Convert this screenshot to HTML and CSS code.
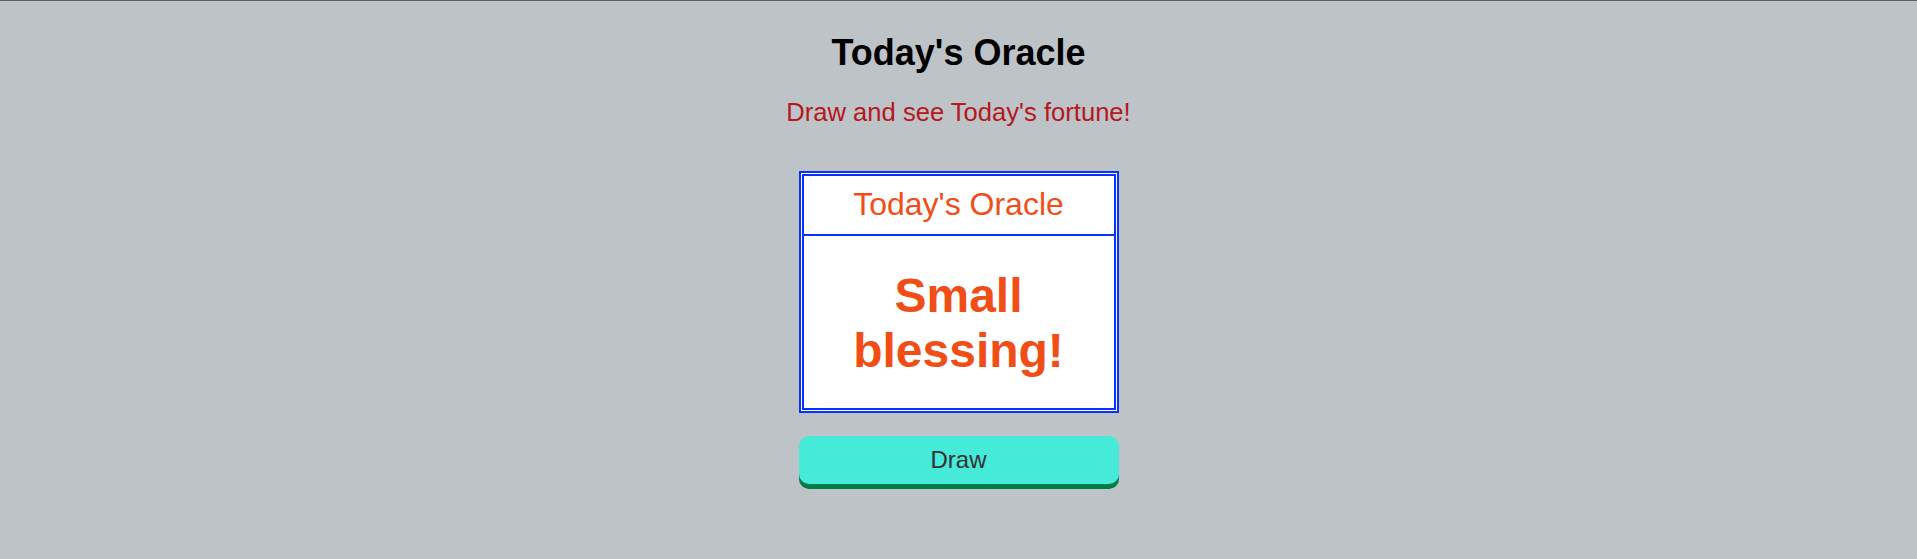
FILE: index.html
```html
<!DOCTYPE html>
<html lang="en">
<head>
<meta charset="utf-8">
<title>Today's Oracle</title>
<link rel="stylesheet" href="styles.css">
</head>
<body>
<main class="page">
  <h1 class="title">Today's Oracle</h1>
  <p class="subtitle">Draw and see Today's fortune!</p>
  <section class="card">
    <div class="card-inner">
      <div class="card-head">Today's Oracle</div>
      <div class="card-body">Small<br>blessing!</div>
    </div>
  </section>
  <button class="draw-btn" type="button">Draw</button>
</main>
</body>
</html>
```
FILE: styles.css
```css
html, body {
  margin: 0;
  padding: 0;
}
body {
  background: #bdc3c7;
  border-top: 1px solid #5c6065;
  font-family: "Liberation Sans", Arial, sans-serif;
  min-height: 558px;
  box-sizing: border-box;
}
.page {
  display: flex;
  flex-direction: column;
  align-items: center;
  padding-top: 32px;
}
.title {
  margin: 0;
  font-size: 36px;
  font-weight: bold;
  color: #000;
  line-height: 40px;
}
.subtitle {
  margin: 25px 0 0;
  font-size: 25.6px;
  line-height: 29px;
  color: #b5171d;
}
.card {
  margin-top: 44px;
  width: 320px;
  box-sizing: border-box;
  border: 2px solid #0a32ff;
  padding: 1px;
  background: #fff;
}
.card-inner {
  border: 2px solid #0a32ff;
  background: #fff;
}
.card-head {
  padding: 10px 0 12px;
  font-size: 32px;
  line-height: 36px;
  text-align: center;
  color: #f14e17;
  border-bottom: 2px solid #0a32ff;
}
.card-body {
  padding: 32px 0 30px;
  font-size: 48px;
  line-height: 55px;
  font-weight: bold;
  text-align: center;
  color: #f14e17;
}
.draw-btn {
  margin-top: 23px;
  width: 320px;
  height: 48px;
  border: none;
  border-radius: 10px;
  background: #45ead9;
  box-shadow: 0 5px 0 #007d46;
  font-family: "Liberation Sans", Arial, sans-serif;
  font-size: 24px;
  color: #333;
  padding: 0;
  cursor: pointer;
}
```
